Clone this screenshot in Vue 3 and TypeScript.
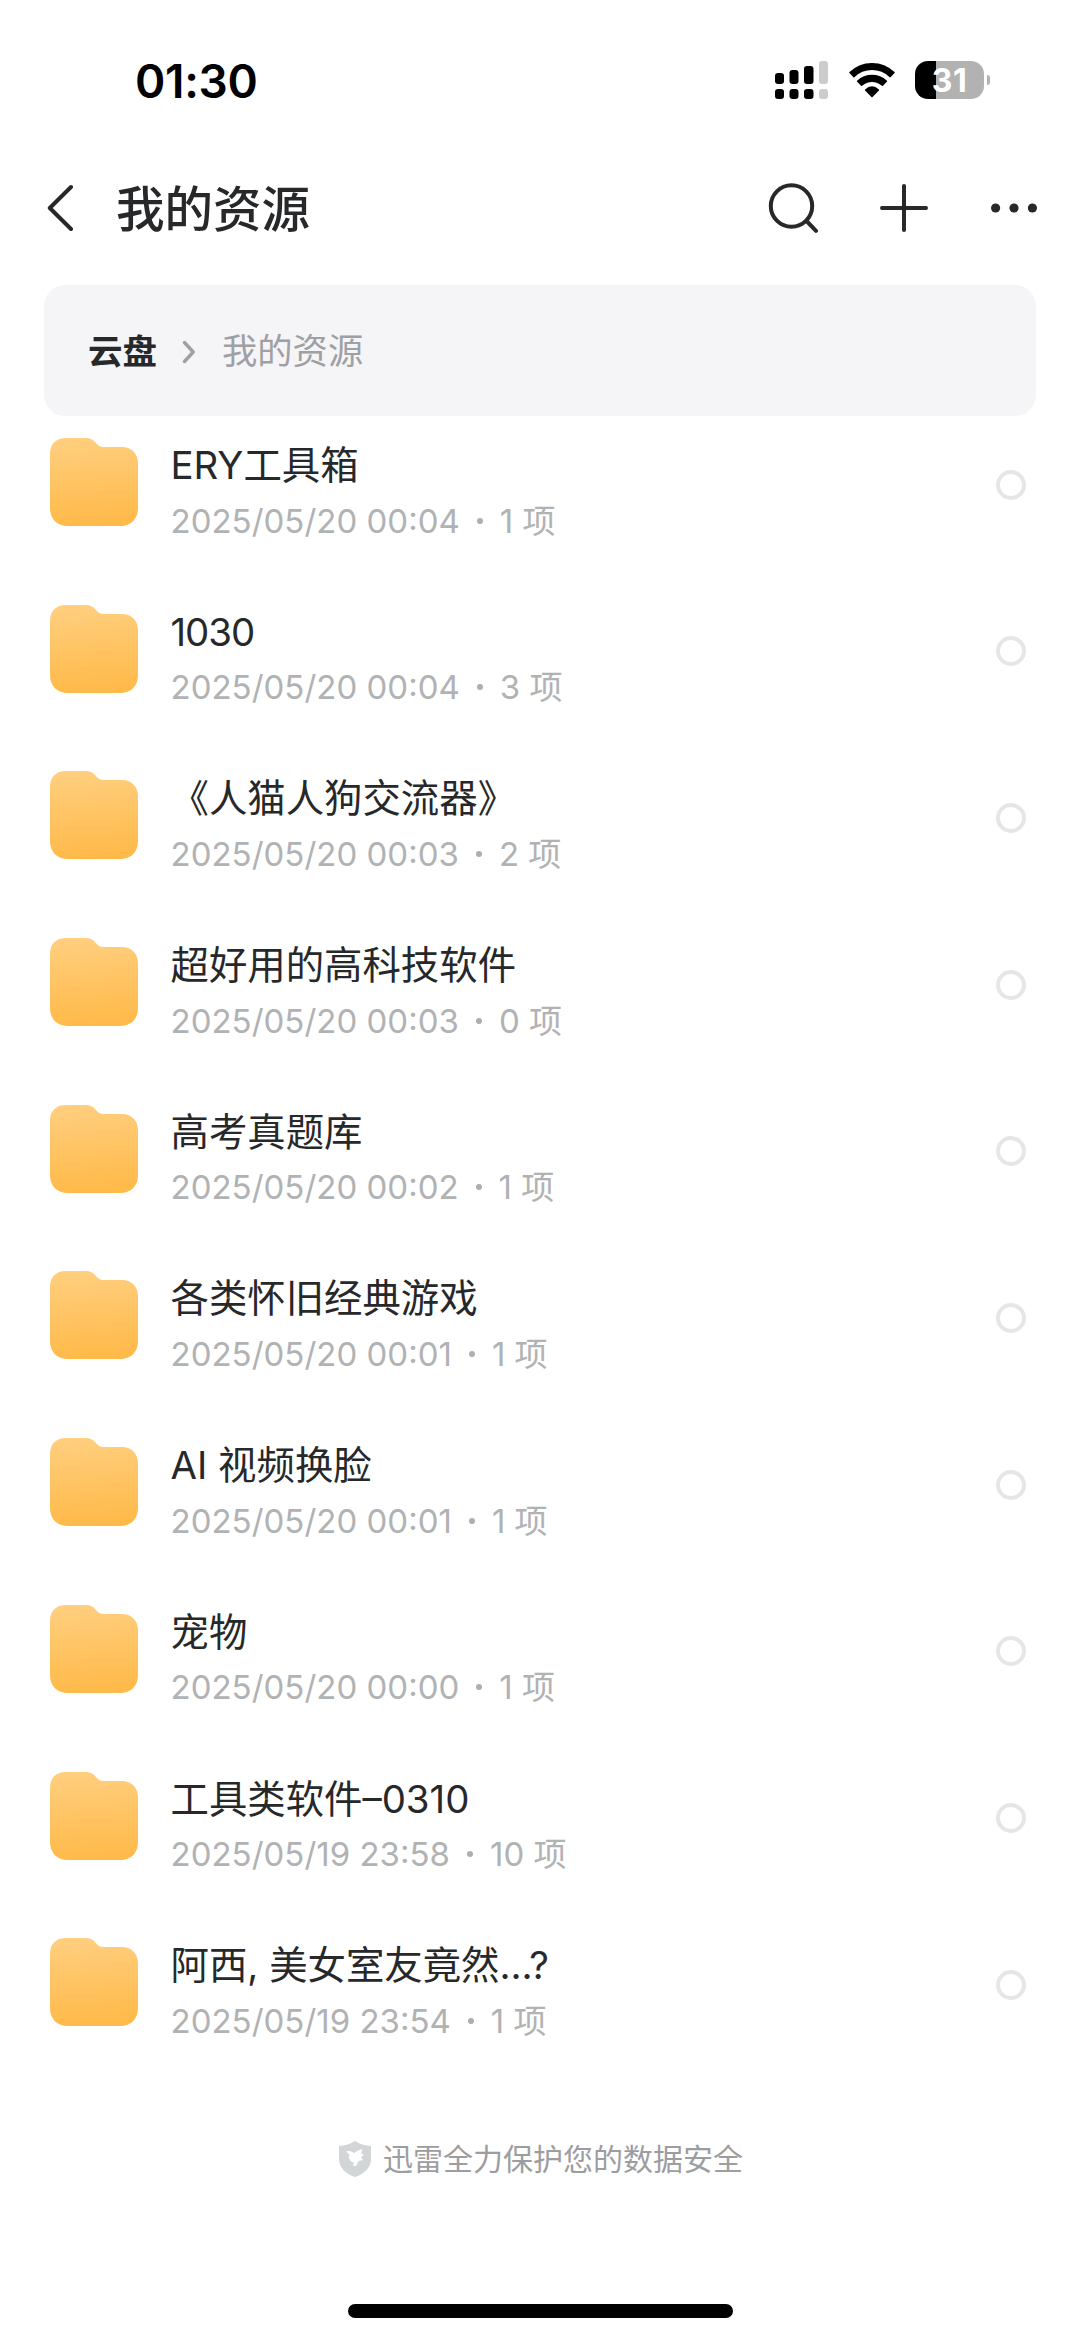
<script setup lang="ts">
interface Folder {
  name: string
  time: string
  count: number
}

const folders: Folder[] = [
  { name: 'ERY工具箱', time: '2025/05/20 00:04', count: 1 },
  { name: '1030', time: '2025/05/20 00:04', count: 3 },
  { name: '《人猫人狗交流器》', time: '2025/05/20 00:03', count: 2 },
  { name: '超好用的高科技软件', time: '2025/05/20 00:03', count: 0 },
  { name: '高考真题库', time: '2025/05/20 00:02', count: 1 },
  { name: '各类怀旧经典游戏', time: '2025/05/20 00:01', count: 1 },
  { name: 'AI 视频换脸', time: '2025/05/20 00:01', count: 1 },
  { name: '宠物', time: '2025/05/20 00:00', count: 1 },
  { name: '工具类软件–0310', time: '2025/05/19 23:58', count: 10 },
  { name: '阿西, 美女室友竟然...?', time: '2025/05/19 23:54', count: 1 },
]
</script>

<template>
  <div class="screen">
    <div class="status">
      <span class="clock">01:30</span>
      <div class="indicators">
        <svg class="signal" width="54" height="40" viewBox="0 0 54 40">
          <rect x="0" y="13" width="9" height="11" rx="3" />
          <rect x="14.5" y="10" width="9" height="14" rx="3" />
          <rect x="29" y="6" width="9.5" height="18" rx="3" />
          <rect x="44" y="1" width="9" height="23" rx="3" class="off" />
          <rect x="0" y="29" width="9" height="10" rx="3" />
          <rect x="14.5" y="29" width="9" height="10" rx="3" />
          <rect x="29" y="29" width="9.5" height="10" rx="3" />
          <rect x="44" y="29" width="9" height="10" rx="3" class="off" />
        </svg>
        <svg class="wifi" width="46" height="40" viewBox="0 0 46 40">
          <g stroke="#000" stroke-width="1.5" stroke-linejoin="round">
            <path d="M1 12.600A31.500 31.500 0 0 1 45 12.600L41.200 16.600A26 26 0 0 0 4.800 16.600Z" />
            <path d="M8.600 21.200A21 21 0 0 1 37.400 21.200L33.400 25.200A15.500 15.500 0 0 0 12.600 25.200Z" />
            <path d="M23 36.400L16.600 30Q23 24 29.400 30Z" />
          </g>
        </svg>
        <div class="battery">
          <div class="cell"><span>31</span></div>
          <i class="tip"></i>
        </div>
      </div>
    </div>

    <header class="nav">
      <svg class="back" width="28" height="50" viewBox="0 0 28 50">
        <path d="M24 4L2.8 25L24 46" />
      </svg>
      <h1>我的资源</h1>
      <div class="actions">
        <svg class="search" width="52" height="52" viewBox="0 0 52 52">
          <circle cx="25.5" cy="24" r="20.7" />
          <path d="M41 39.500L50 48.8" />
        </svg>
        <svg width="52" height="52" viewBox="0 0 52 52">
          <path d="M26 4V48M4 26H48" />
        </svg>
        <svg class="more" width="48" height="12" viewBox="0 0 48 12">
          <circle cx="5.6" cy="6" r="4.6" />
          <circle cx="24" cy="6" r="4.6" />
          <circle cx="42.4" cy="6" r="4.6" />
        </svg>
      </div>
    </header>

    <nav class="crumbs">
      <b>云盘</b>
      <svg width="14" height="26" viewBox="0 0 14 26"><path d="M2.5 3.5L11.2 13L2.5 22.5" /></svg>
      <span>我的资源</span>
    </nav>

    <svg class="defs" width="0" height="0">
      <defs>
        <linearGradient id="folderFill" x1="0" y1="0" x2="0.08" y2="1">
          <stop offset="0" stop-color="#ffcf80" />
          <stop offset="1" stop-color="#ffba4a" />
        </linearGradient>
      </defs>
    </svg>

    <ul class="list">
      <li v-for="folder in folders" :key="folder.name" class="row">
        <svg class="folder" width="88" height="88" viewBox="0 0 88 88">
          <path
            fill="url(#folderFill)"
            d="M16 0H36C40 0 42 1.4 44 3L47.600 6.800C49.500 8.600 51 9 53 9H72C82 9 88 16 88 25V70C88 81 81 88 70 88H18C7 88 0 81 0 70V16C0 6 6 0 16 0Z"
          />
        </svg>
        <div class="info">
          <div class="name" :class="{ latin: /^[\w ]+$/.test(folder.name) }">{{ folder.name }}</div>
          <div class="meta">
            <span>{{ folder.time }}</span><i class="dot"></i><span>{{ folder.count }} 项</span>
          </div>
        </div>
        <i class="check"></i>
      </li>
    </ul>

    <footer class="safe">
      <svg width="32" height="36" viewBox="0 0 32 36">
        <path fill="#d2d6d7" d="M16 0C20.500 3 26 4.600 32 5V18C32 27 25 33 16 36C7 33 0 27 0 18V5C6 4.600 11.500 3 16 0Z" />
        <path fill="#fff" d="M7.300 10.300C10 9.600 13 10.200 15 12.200C17 10.500 20 8.800 23.500 8L22 12.700L24.800 13.300L22 16.700L24.200 19L19.300 20.200C18.500 22 17.800 23.800 17 25.300L13.800 24.600L15 21.800C11.500 20.500 9.700 18.300 9.800 15.500L10.800 14.600Z" />
      </svg>
      <span>迅雷全力保护您的数据安全</span>
    </footer>
    <div class="home"></div>
  </div>
</template>

<style>
body {
  background: #fff;
}
</style>

<style scoped>
.screen {
  width: 1080px;
  height: 2341px;
  overflow: hidden;
  display: flex;
  flex-direction: column;
  background: #fff;
  color: #27282a;
  font-family: Inter, 'Noto Sans CJK SC', sans-serif;
}
.status {
  height: 160px;
  flex: none;
  display: flex;
  justify-content: space-between;
  padding: 0 90px 0 135px;
}
.clock {
  margin-top: 53px;
  height: 56px;
  line-height: 56px;
  font-size: 46px;
  font-weight: 600;
  letter-spacing: -0.3px;
  color: #000;
}
.indicators {
  display: flex;
  margin-top: 60px;
  height: 40px;
}
.off {
  fill: #ccc;
}
.wifi {
  margin-left: 20px;
}
.battery {
  display: flex;
  align-items: center;
  margin-left: 20px;
}
.cell {
  width: 69px;
  height: 38px;
  border-radius: 13px;
  background: linear-gradient(90deg, #000 21px, #b2b2b2 21px);
  color: #fff;
  font-size: 32px;
  font-weight: 700;
  letter-spacing: 0.5px;
  line-height: 39px;
  text-align: center;
}
.tip {
  width: 3px;
  height: 10px;
  margin-left: 3px;
  border-radius: 0 3px 3px 0;
  background: #b2b2b2;
}
.nav {
  height: 96px;
  flex: none;
  display: flex;
  align-items: center;
  padding: 0 42px 0 47px;
}
.nav svg {
  fill: none;
  stroke: #27282a;
  stroke-width: 4;
  stroke-linecap: round;
}
.back {
  stroke-linejoin: round;
}
h1 {
  margin: 4px 0 0 41px;
  font-size: 48.500px;
  font-weight: 500;
  line-height: 70px;
}
.actions {
  display: flex;
  align-items: center;
  margin-left: auto;
  gap: 60px;
}
.nav .more {
  fill: #27282a;
  stroke: none;
}
.crumbs {
  flex: none;
  margin: 29px 44px 0;
  height: 131px;
  box-sizing: border-box;
  padding: 2px 0 0 44px;
  border-radius: 21px;
  background: #f5f5f8;
  display: flex;
  align-items: center;
  font-size: 35.300px;
  line-height: 50px;
}
.crumbs b {
  font-weight: 700;
  font-size: 34.500px;
}
.crumbs svg {
  margin: 0 26px 0 25px;
  fill: none;
  stroke: #9fa1a4;
  stroke-width: 3.500;
  stroke-linecap: round;
  stroke-linejoin: round;
}
.crumbs span {
  color: #9fa0a3;
}
.defs {
  position: absolute;
}
.list {
  flex: none;
  list-style: none;
  margin: 0;
  padding: 22px 54px 0 49.500px;
}
.row {
  height: 166.700px;
  display: flex;
  align-items: flex-start;
}
.info {
  margin-left: 33px;
}
.name {
  height: 55.500px;
  line-height: 55.500px;
  font-size: 38.400px;
  white-space: pre;
}
.name.latin {
  letter-spacing: -1px;
}
.meta {
  height: 54px;
  line-height: 54px;
  display: flex;
  align-items: center;
  font-size: 33px;
  font-weight: 400;
  color: #b1b2b4;
  white-space: pre;
}
.dot {
  width: 6px;
  height: 6px;
  margin: 0 17px;
  border-radius: 50%;
  background: #adaeb0;
}
.check {
  box-sizing: border-box;
  width: 30px;
  height: 30px;
  margin: 31.500px 0 0 auto;
  border: 4px solid #e6e6e6;
  border-radius: 50%;
}
.safe {
  flex: none;
  margin-top: 32.500px;
  padding-left: 2px;
  display: flex;
  align-items: center;
  justify-content: center;
  gap: 12px;
  font-size: 30px;
  line-height: 44px;
  color: #9c9da1;
}
.home {
  flex: none;
  width: 385px;
  height: 14px;
  margin: 123px auto 0;
  border-radius: 7px;
  background: #000;
}
</style>
